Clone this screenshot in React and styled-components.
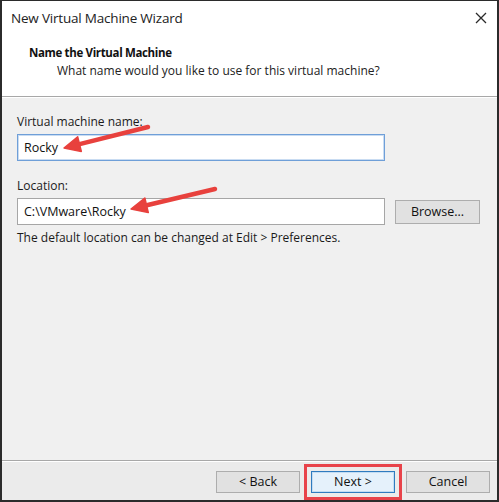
import React from "react"
import styled, { createGlobalStyle } from "styled-components"

const GlobalStyle = createGlobalStyle`
  html, body {
    margin: 0;
    padding: 0;
    background: #ffffff;
  }
  * {
    box-sizing: border-box;
  }
`

const Window = styled.div`
  position: relative;
  width: 499px;
  height: 502px;
  display: flex;
  flex-direction: column;
  border-style: solid;
  border-color: #2b2b2b;
  border-width: 1px 2px 2px 2px;
  background: #f0f0f0;
  font-family: "Open Sans", "Noto Sans", sans-serif;
  font-size: 12px;
  color: #1a1a1a;
  overflow: hidden;
`

const Header = styled.div`
  background: #ffffff;
  height: 96px;
  border-bottom: 1px solid #a8a8a8;
  display: flex;
  flex-direction: column;
`

const TitleBar = styled.div`
  height: 34px;
  display: flex;
  align-items: center;
  justify-content: space-between;
  padding: 0 10px 0 9px;
  font-size: 13.5px;
  letter-spacing: -0.2px;
  color: #222;
`

const CloseIcon = styled.svg`
  width: 12px;
  height: 12px;
`

const Heading = styled.div`
  padding: 9px 0 0 27px;
  display: flex;
  flex-direction: column;
  gap: 1px;
`

const HeadingTitle = styled.div`
  font-weight: 700;
  font-size: 11.5px;
  letter-spacing: -0.35px;
  line-height: 17px;
  color: #111;
`

const HeadingSub = styled.div`
  padding-left: 28px;
  font-size: 12px;
  line-height: 17px;
  color: #222;
`

const Body = styled.div`
  flex: 1;
  border-top: 1px solid #ffffff;
  padding: 16px 17px 0 15px;
  display: flex;
  flex-direction: column;
`

const Label = styled.div`
  line-height: 16px;
  margin-bottom: ${p => p.$gap || 4}px;
`

const Row = styled.div`
  display: flex;
  align-items: center;
  gap: 10px;
  margin-bottom: ${p => p.$after || 0}px;
`

const Field = styled.div`
  width: 368px;
  height: 27px;
  display: flex;
  align-items: center;
  padding: 0 6px;
  background: #ffffff;
  border: 1px solid ${p => (p.$focused ? "#6f9fd8" : "#a6a6a6")};
  box-shadow: ${p => (p.$focused ? "inset 0 0 0 1px #c9dcf2" : "none")};
  font-size: 12.5px;
  color: #111;
`

const Button = styled.div`
  width: ${p => p.$w || 84}px;
  height: ${p => p.$h || 22}px;
  display: flex;
  align-items: center;
  justify-content: center;
  background: ${p => (p.$primary ? "#e5f1fb" : "#e1e1e1")};
  border: 1px solid ${p => (p.$primary ? "#2f7bbf" : "#adadad")};
  box-shadow: ${p => (p.$primary ? "inset 0 0 0 1px #c4ddf3" : "none")};
  color: #111;
  font-size: 12.5px;
  outline: ${p => (p.$highlight ? "3px solid #e8434a" : "none")};
  outline-offset: 4px;
`

const Hint = styled.div`
  margin-top: 5px;
  line-height: 16px;
`

const Footer = styled.div`
  height: 40px;
  border-top: 1px solid #a8a8a8;
  box-shadow: inset 0 1px 0 #ffffff;
  background: #ebebeb;
  display: flex;
  align-items: center;
  justify-content: flex-end;
  gap: 11px;
  padding: 2px 7px 0 0;
`

const Overlay = styled.svg`
  position: absolute;
  left: -2px;
  top: -1px;
  width: 499px;
  height: 502px;
  pointer-events: none;
`

function Arrow({ x1, y1, x2, y2 }) {
  const dx = x2 - x1
  const dy = y2 - y1
  const len = Math.hypot(dx, dy)
  const ux = dx / len
  const uy = dy / len
  const head = 16
  const half = 7.5
  const bx = x2 - ux * head
  const by = y2 - uy * head
  const px = -uy
  const py = ux
  const pts = [
    [x2, y2],
    [bx + px * half, by + py * half],
    [bx - px * half, by - py * half],
  ]
    .map(p => p.join(","))
    .join(" ")
  return (
    <g>
      <line x1={x1} y1={y1} x2={bx + ux * 2} y2={by + uy * 2} stroke="#e8413d" strokeWidth="4.5" strokeLinecap="round" />
      <polygon points={pts} fill="#e8413d" strokeLinejoin="round" stroke="#e8413d" strokeWidth="1.5" />
    </g>
  )
}

export default function App() {
  return (
    <>
      <GlobalStyle />
      <Window>
        <Header>
          <TitleBar>
            <span>New Virtual Machine Wizard</span>
            <CloseIcon viewBox="0 0 12 12">
              <path d="M1 1 L11 11 M11 1 L1 11" stroke="#2a2a2a" strokeWidth="1.3" fill="none" />
            </CloseIcon>
          </TitleBar>
          <Heading>
            <HeadingTitle>Name the Virtual Machine</HeadingTitle>
            <HeadingSub>What name would you like to use for this virtual machine?</HeadingSub>
          </Heading>
        </Header>
        <Body>
          <Label>Virtual machine name:</Label>
          <Row $after={17}>
            <Field $focused>Rocky</Field>
          </Row>
          <Label>Location:</Label>
          <Row>
            <Field>C:\VMware\Rocky</Field>
            <Button $w={85} $h={24}>Browse...</Button>
          </Row>
          <Hint>The default location can be changed at Edit &gt; Preferences.</Hint>
        </Body>
        <Footer>
          <Button>&lt; Back</Button>
          <Button $primary $highlight>Next &gt;</Button>
          <Button>Cancel</Button>
        </Footer>
        <Overlay viewBox="0 0 499 502">
          <Arrow x1={148} y1={127} x2={64} y2={148} />
          <Arrow x1={215} y1={189} x2={131} y2={209} />
        </Overlay>
      </Window>
    </>
  )
}
